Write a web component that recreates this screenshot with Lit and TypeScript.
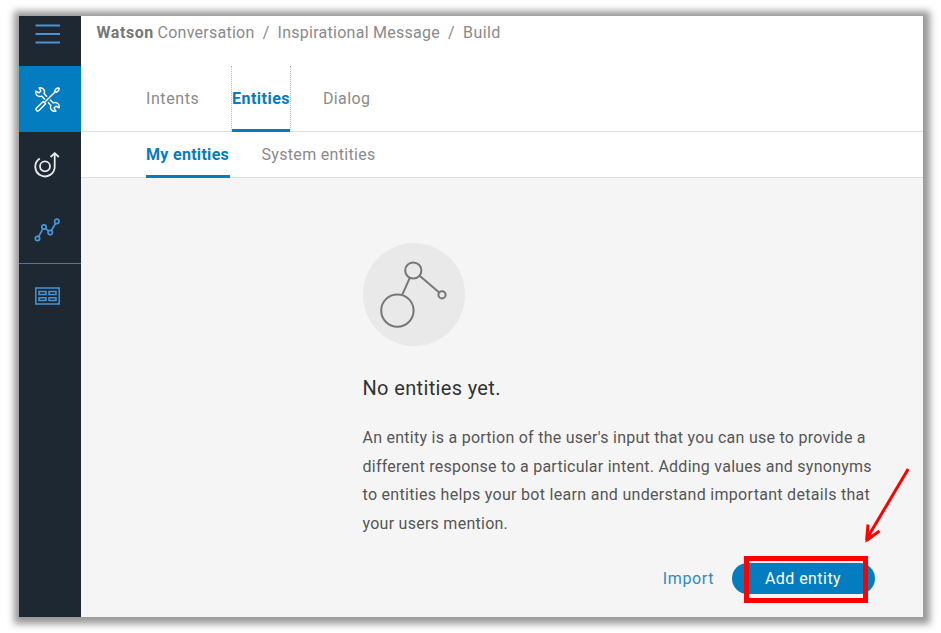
import { LitElement, html, css, svg } from "lit";
import { customElement } from "lit/decorators.js";

const menuIcon = svg`<path d="M.5 1.5H25M.5 10H25M.5 18.5H25" />`;

const toolsIcon = svg`
  <path d="M12 9.7 9.1 6.6C9.7 5.3 9.6 4 9 2.9C8.1 1.2 6.2.4 4.1.9L5.9 4 4.1 5.8.9 4.1C.4 6.2 1.2 8.1 2.9 9C4 9.6 5.3 9.7 6.6 9.1L10 12.4" />
  <path d="M15 12.7 18.4 15.9C19.7 15.3 21 15.4 22.1 16C23.8 16.9 24.6 18.8 24.1 20.9L20.9 19.2 19.1 21 20.9 24.1C18.8 24.6 16.9 23.8 16 22.1C15.4 21 15.3 19.7 15.9 18.4L13 15.3" />
  <path d="M9.7 15.3 20 5" />
  <path d="M19.6 3.9 21.4 1.5 23.6.9 24.2 1.5 23.6 3.6 21.2 5.4Z" />
  <path d="M8.2 14.4 10.6 16.8 4 23.5C2.4 25 0 22.6 1.5 21Z" />`;

@customElement("app-root")
export class AppRoot extends LitElement {
  static styles = css`
    :host { display: block; width: 941px; height: 633px; box-sizing: border-box; padding: 16px 18px 16px 19px; background: #fff; overflow: hidden; font: 16px/20px Roboto, "Noto Sans", sans-serif; color: #8a8a8a; letter-spacing: .26px; }
    .window { position: relative; display: flex; height: 601px; background: #fff; box-shadow: 1px 1px 7px 6px #999; }
    .rail { width: 61.5px; flex: none; background: #1d2833; display: flex; flex-direction: column; color: #4795d8; }
    .item { height: 65.5px; display: flex; align-items: center; justify-content: center; padding-right: 5px; box-sizing: border-box; }
    .menu { height: 50px; align-items: flex-start; padding-top: 8px; }
    .active { background: #047cc0; color: #fff; height: 66px; }
    .pale { color: #e8eaec; }
    .ruled { height: 66.5px; border-bottom: 1px solid #3f7fae; }
    svg { display: block; fill: none; stroke: currentColor; flex: none; }
    .main { flex: 1; min-width: 0; display: flex; flex-direction: column; }
    .crumbs { height: 50px; box-sizing: border-box; padding: 7px 0 0 16px; display: flex; white-space: pre; }
    .crumbs b { color: #777; letter-spacing: .58px; width: 61px; }
    .slash { width: 23px; text-align: center; }
    .build { letter-spacing: .45px; }
    .tabs { display: flex; height: 66px; box-sizing: border-box; border-bottom: 1px solid #dfdfdf; padding-left: 65.5px; }
    .tab { height: 66px; box-sizing: border-box; padding-top: 23px; white-space: nowrap; }
    .intents { width: 85px; letter-spacing: .58px; }
    .focus { width: 60px; border: dotted #bdbdbd; border-width: 0 1px; color: #047cc0; font-weight: 700; letter-spacing: .48px; margin-right: 32px; box-shadow: inset 0 -3px #047cc0; }
    .dialog { letter-spacing: .36px; }
    .subs { height: 46px; box-sizing: border-box; border-bottom: 1px solid #dfdfdf; display: flex; padding-left: 65.5px; }
    .sub { height: 46px; box-sizing: border-box; padding-top: 13px; letter-spacing: .32px; }
    .chosen { width: 84px; color: #047cc0; font-weight: 700; box-shadow: inset 0 -3px #047cc0; margin-right: 31.5px; letter-spacing: .3px; white-space: nowrap; }
    .content { flex: 1; background: #f5f5f5; padding: 65px 0 0 282px; }
    .bubble { width: 102.5px; height: 103px; border-radius: 50%; background: #e9e9e9; color: #777; }
    .title { margin: 29px 0 0; font-size: 20px; line-height: 26px; font-weight: 400; color: #323232; letter-spacing: .35px; }
    .copy { margin: 23px 0 0; line-height: 28.7px; color: #565656; white-space: nowrap; }
    .line { display: block; }
    .l2 { letter-spacing: .25px; }
    .l3 { letter-spacing: .3px; }
    .actions { display: flex; align-items: center; margin-top: 24px; width: 512px; justify-content: flex-end; }
    .import { color: #3187c8; letter-spacing: .6px; margin-right: 17.5px; padding-top: 2px; }
    .add { width: 143px; height: 31px; border-radius: 16px; background: #047cc0; color: #fff; display: flex; align-items: center; justify-content: center; letter-spacing: .45px; padding-top: 1px; box-sizing: border-box; }
    .mark { position: absolute; left: 725px; top: 540px; width: 124px; height: 47px; box-sizing: border-box; border: 5px solid #fe0000; }
    .arrow { position: absolute; left: 841px; top: 449px; color: #fe0000; stroke-width: 3; }
  `;

  render() {
    return html`
      <div class="window">
        <nav class="rail">
          <div class="item menu"><svg width="25" height="20" stroke-width="1.8">${menuIcon}</svg></div>
          <div class="item active"><svg width="25" height="25" stroke-width="1.4" stroke-linejoin="round">${toolsIcon}</svg></div>
          <div class="item pale"><svg width="26" height="26" stroke-width="1.8">
            <circle cx="11" cy="14.3" r="5" />
            <path d="M5.8 6.5A9.7 9.7 0 1 0 20.7 14.3V1.3M16.6 5 20.7 1.2 24.8 5" />
          </svg></div>
          <div class="item ruled"><svg width="26" height="26" stroke-width="1.7">
            <circle cx="3.5" cy="21.5" r="2.2" /><circle cx="10" cy="10" r="2.2" /><circle cx="16.2" cy="15.6" r="2.2" /><circle cx="22.8" cy="4.4" r="2.2" />
            <path d="M4.6 19.6 8.9 11.9M11.7 11.4 14.6 14.1M17.3 13.7 21.7 6.3" />
          </svg></div>
          <div class="item"><svg width="25" height="20" stroke-width="1.5">
            <path d="M.8.9H24.2V17.1H.8ZM4 4.6H11V7.4H4ZM14 4.6H21V7.4H14ZM4 10.8H11V13.6H4ZM14 10.8H21V13.6H14Z" />
          </svg></div>
        </nav>
        <main class="main">
          <div class="crumbs"><b>Watson</b><span>Conversation</span><span class="slash">/</span><span>Inspirational Message</span><span class="slash">/</span><span class="build">Build</span></div>
          <div class="tabs">
            <span class="tab intents">Intents</span>
            <span class="tab focus">Entities</span>
            <span class="tab dialog">Dialog</span>
          </div>
          <div class="subs">
            <span class="sub chosen">My entities</span>
            <span class="sub">System entities</span>
          </div>
          <section class="content">
            <div class="bubble"><svg width="103" height="103" stroke-width="2">
              <circle cx="50.3" cy="27.5" r="8.1" /><circle cx="34.4" cy="67.6" r="16.2" /><circle cx="79" cy="51.8" r="3.6" />
              <path d="M46.8 34.9 39.3 51.6M56.6 32.8 76.2 49.4" />
            </svg></div>
            <h1 class="title">No entities yet.</h1>
            <p class="copy">
              <span class="line">An entity is a portion of the user's input that you can use to provide a</span>
              <span class="line l2">different response to a particular intent. Adding values and synonyms</span>
              <span class="line l3">to entities helps your bot learn and understand important details that</span>
              <span class="line">your users mention.</span>
            </p>
            <div class="actions"><span class="import">Import</span><span class="add">Add entity</span></div>
          </section>
        </main>
        <div class="mark"></div>
        <svg class="arrow" width="54" height="80"><path d="M48.2 4 9 70" /><path d="M8 59.5 6.6 75.4M6.4 75.5 19.5 66" /><path d="M5.2 77.8 7.2 67 13.8 71.2Z" fill="currentColor" stroke="none" /></svg>
      </div>`;
  }
}
